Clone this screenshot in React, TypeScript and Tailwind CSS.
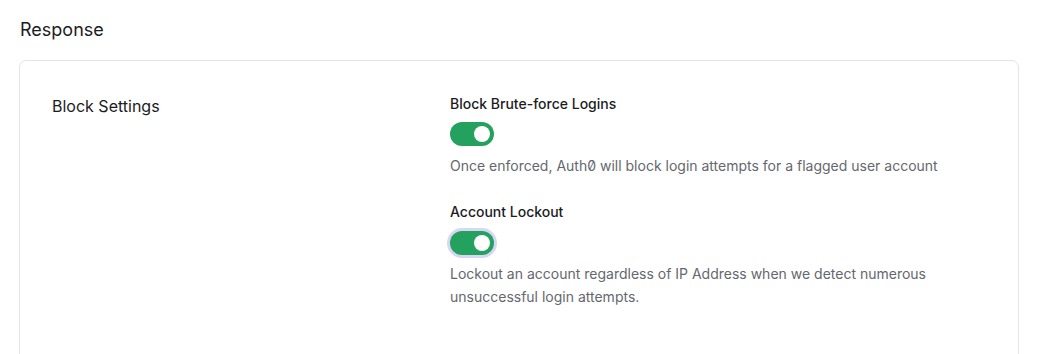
import React from "react";

function Toggle({ focused }: { focused?: boolean }) {
  return (
    <div
      className={
        "mt-[8px] w-[44px] h-[24px] rounded-full bg-[#25a15f] flex items-center justify-end pr-[4px] " +
        (focused ? "ring-[3px] ring-[#d6d6f5]" : "")
      }
    >
      <div className="w-[16px] h-[16px] rounded-full bg-white" />
    </div>
  );
}

export default function App() {
  return (
    <div className="w-[1038px] h-[354px] bg-white overflow-hidden font-['Inter',sans-serif] slashed-zero">
      <div className="px-[19px] pt-[18px]">
        <h2 className="pl-[1px] text-[18px] leading-[24px] text-[#1c1c1e] font-normal">Response</h2>
        <div className="mt-[18px] border border-[#e4e4e7] rounded-[7px] h-[320px] pl-[32px] pt-[30px] flex">
          <div className="w-[398px] pt-[1px] text-[16px] leading-[28px] text-[#1c1c1e]">Block Settings</div>
          <div className="flex flex-col">
            <div className="pt-[3px] text-[14px] leading-[20px] font-medium text-[#1c1c1e]">Block Brute-force Logins</div>
            <Toggle />
            <p className="mt-[8px] text-[14px] leading-[24px] text-[#65676e]">
              Once enforced, Auth0 will block login attempts for a flagged user account
            </p>
            <div className="mt-[24px] text-[14px] leading-[20px] font-medium text-[#1c1c1e]">Account Lockout</div>
            <div className="mt-[1px]">
              <Toggle focused />
            </div>
            <p className="mt-[7px] w-[490px] text-[14px] leading-[23px] text-[#65676e]">
              Lockout an account regardless of IP Address when we detect numerous unsuccessful login attempts.
            </p>
          </div>
        </div>
      </div>
    </div>
  );
}
